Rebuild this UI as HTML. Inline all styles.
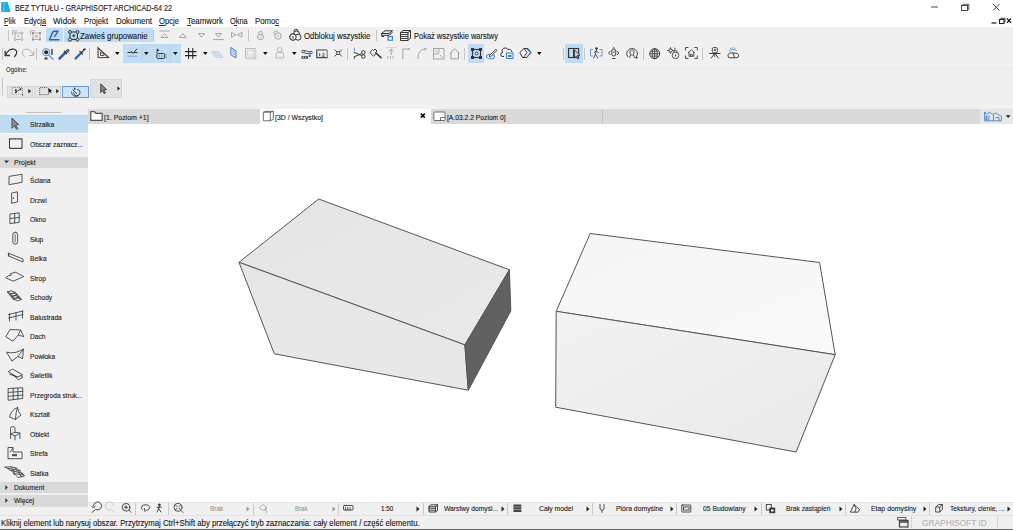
<!DOCTYPE html>
<html><head><meta charset="utf-8"><style>
html,body{margin:0;padding:0;}
body{width:1013px;height:530px;overflow:hidden;position:relative;background:#fff;font-family:"Liberation Sans",sans-serif;}
.t{position:absolute;white-space:nowrap;-webkit-text-stroke:0.12px currentColor;}
svg{overflow:visible}
</style></head><body>
<div style="position:absolute;left:0px;top:0px;width:1013px;height:26.5px;background:#ffffff;"></div>
<div class="t" style="left:14.8px;top:3.78px;font-size:9px;line-height:9px;color:#1a1a1a;transform:scaleX(0.802);transform-origin:0 0;">BEZ TYTUŁU - GRAPHISOFT ARCHICAD-64 22</div>
<svg style="position:absolute;left:1px;top:2px;" width="11" height="10" viewBox="0 0 11 10"><rect x="0.2" y="0" width="10.4" height="9.9" fill="#d8f1fa"/><path d="M0.2 0 H6.3 L9.2 9.9 H0.2 Z" fill="#22ade3"/><path d="M2.6 0.5 L3.6 0.5 L3.4 9.9 L2.2 9.9 Z" fill="#5ccff5" opacity="0.8"/><path d="M6.3 0 L9.2 9.9 H8.4 L5.6 0.6Z" fill="#1a9fd6"/></svg>
<div class="t" style="left:4.3px;top:17.76px;font-size:8.2px;line-height:8.2px;color:#1a1a1a;transform:scaleX(0.870);transform-origin:0 0;">Plik</div>
<div class="t" style="left:23.7px;top:17.76px;font-size:8.2px;line-height:8.2px;color:#1a1a1a;transform:scaleX(0.898);transform-origin:0 0;">Edycja</div>
<div class="t" style="left:52.9px;top:17.76px;font-size:8.2px;line-height:8.2px;color:#1a1a1a;transform:scaleX(1.014);transform-origin:0 0;">Widok</div>
<div class="t" style="left:83.5px;top:17.76px;font-size:8.2px;line-height:8.2px;color:#1a1a1a;transform:scaleX(0.944);transform-origin:0 0;">Projekt</div>
<div class="t" style="left:115.5px;top:17.76px;font-size:8.2px;line-height:8.2px;color:#1a1a1a;transform:scaleX(0.966);transform-origin:0 0;">Dokument</div>
<div class="t" style="left:158.9px;top:17.76px;font-size:8.2px;line-height:8.2px;color:#1a1a1a;transform:scaleX(0.934);transform-origin:0 0;">Opcje</div>
<div class="t" style="left:187px;top:17.76px;font-size:8.2px;line-height:8.2px;color:#1a1a1a;transform:scaleX(0.961);transform-origin:0 0;">Teamwork</div>
<div class="t" style="left:230px;top:17.76px;font-size:8.2px;line-height:8.2px;color:#1a1a1a;transform:scaleX(0.903);transform-origin:0 0;">Okna</div>
<div class="t" style="left:255.4px;top:17.76px;font-size:8.2px;line-height:8.2px;color:#1a1a1a;transform:scaleX(0.948);transform-origin:0 0;">Pomoc</div>
<div style="position:absolute;left:4.3px;top:25.2px;width:3.3px;height:0.6999999999999993px;background:#333;"></div>
<div style="position:absolute;left:42.3px;top:25.2px;width:3.700000000000003px;height:0.6999999999999993px;background:#333;"></div>
<div style="position:absolute;left:159px;top:25.2px;width:5.5px;height:0.6999999999999993px;background:#333;"></div>
<div style="position:absolute;left:187.3px;top:25.2px;width:4.199999999999989px;height:0.6999999999999993px;background:#333;"></div>
<div style="position:absolute;left:233.6px;top:25.2px;width:3.0px;height:0.6999999999999993px;background:#333;"></div>
<div style="position:absolute;left:275px;top:25.2px;width:3.5px;height:0.6999999999999993px;background:#333;"></div>
<svg style="position:absolute;left:925px;top:0px;" width="88" height="26" viewBox="0 0 88 26">
<line x1="6" y1="7" x2="13" y2="7" stroke="#333" stroke-width="0.9"/>
<rect x="36.5" y="5.5" width="6" height="5" fill="none" stroke="#333" stroke-width="0.9"/>
<path d="M38 5.5 V4.3 H43.8 V9.5 H42.5" fill="none" stroke="#333" stroke-width="0.8"/>
<path d="M68 4 L74.5 10.5 M74.5 4 L68 10.5" stroke="#333" stroke-width="0.9"/>
<line x1="66.5" y1="23" x2="71.5" y2="23" stroke="#222" stroke-width="1.3"/>
<rect x="74.5" y="19.5" width="4.5" height="4" fill="none" stroke="#222" stroke-width="1.1"/>
<path d="M76 19.5 V18.3 H80 V22 H79" fill="none" stroke="#222" stroke-width="0.9"/>
<path d="M82 18.5 L86 22.8 M86 18.5 L82 22.8" stroke="#222" stroke-width="1.3"/>
</svg>
<div style="position:absolute;left:0px;top:26.5px;width:1013px;height:83.5px;background:#f0f0f0;"></div>
<div style="position:absolute;left:0px;top:64px;width:1013px;height:1px;background:#f5f5f5;"></div>
<div style="position:absolute;left:0px;top:105.4px;width:1013px;height:0.7999999999999972px;background:#f4f4f4;"></div>
<div style="position:absolute;left:45.9px;top:28.4px;width:17.300000000000004px;height:14.0px;background:#bfdcf4;"></div>
<div style="position:absolute;left:63.8px;top:28.4px;width:88.8px;height:14.0px;background:#bfdcf4;"></div>
<div class="t" style="left:80.2px;top:32.30px;font-size:8.5px;line-height:8.5px;color:#1a1a1a;transform:scaleX(0.924);transform-origin:0 0;">Zawieś grupowanie</div>
<div class="t" style="left:303.6px;top:32.30px;font-size:8.5px;line-height:8.5px;color:#1a1a1a;transform:scaleX(0.919);transform-origin:0 0;">Odblokuj wszystkie</div>
<div class="t" style="left:413.6px;top:32.30px;font-size:8.5px;line-height:8.5px;color:#1a1a1a;transform:scaleX(0.880);transform-origin:0 0;">Pokaż wszystkie warstwy</div>
<div style="position:absolute;left:8.2px;top:30px;width:1.0px;height:11px;background:#c4c4c4;"></div>
<div style="position:absolute;left:153.3px;top:30px;width:1.0px;height:11px;background:#c4c4c4;"></div>
<div style="position:absolute;left:247.8px;top:30px;width:1.0px;height:11px;background:#c4c4c4;"></div>
<div style="position:absolute;left:375.5px;top:30px;width:1.0px;height:11px;background:#c4c4c4;"></div>
<div style="position:absolute;left:122.5px;top:44px;width:29.0px;height:18.700000000000003px;background:#bfdcf4;"></div>
<div style="position:absolute;left:141.6px;top:44px;width:0.5999999999999943px;height:18.700000000000003px;background:#b5d2ee;"></div>
<div style="position:absolute;left:152px;top:44px;width:28.5px;height:18.700000000000003px;background:#bfdcf4;"></div>
<div style="position:absolute;left:169.8px;top:44px;width:0.5999999999999943px;height:18.700000000000003px;background:#b5d2ee;"></div>
<div style="position:absolute;left:468px;top:44px;width:16px;height:18.700000000000003px;background:#bfdcf4;"></div>
<div style="position:absolute;left:564.7px;top:44px;width:18.59999999999991px;height:18.700000000000003px;background:#bfdcf4;"></div>
<div style="position:absolute;left:2.0px;top:48px;width:1.0px;height:11.5px;background:#c4c4c4;"></div>
<div style="position:absolute;left:36.0px;top:48px;width:1.0px;height:11.5px;background:#c4c4c4;"></div>
<div style="position:absolute;left:88.8px;top:48px;width:1.0px;height:11.5px;background:#c4c4c4;"></div>
<div style="position:absolute;left:347.3px;top:48px;width:1.0px;height:11.5px;background:#c4c4c4;"></div>
<div style="position:absolute;left:463.5px;top:48px;width:1.0px;height:11.5px;background:#c4c4c4;"></div>
<div style="position:absolute;left:562.8px;top:48px;width:1.0px;height:11.5px;background:#c4c4c4;"></div>
<div style="position:absolute;left:584.2px;top:48px;width:1.0px;height:11.5px;background:#c4c4c4;"></div>
<div style="position:absolute;left:643.2px;top:48px;width:1.0px;height:11.5px;background:#c4c4c4;"></div>
<div style="position:absolute;left:702.0px;top:48px;width:1.0px;height:11.5px;background:#c4c4c4;"></div>
<div class="t" style="left:6.4px;top:66.31px;font-size:7.2px;line-height:7.2px;color:#333;transform:scaleX(0.841);transform-origin:0 0;">Ogólne:</div>
<div style="position:absolute;left:2.1px;top:78px;width:1.0px;height:18px;background:#c8c8c8;"></div>
<div style="position:absolute;left:7px;top:85.7px;width:25.700000000000003px;height:12.200000000000003px;background:#e3e3e3;box-sizing:border-box;border:1px solid #d2d2d2;"></div>
<div style="position:absolute;left:34.4px;top:85.7px;width:26.200000000000003px;height:12.200000000000003px;background:#e3e3e3;box-sizing:border-box;border:1px solid #d2d2d2;"></div>
<div style="position:absolute;left:62.3px;top:85.7px;width:26.299999999999997px;height:12.200000000000003px;background:#cde3f8;box-sizing:border-box;border:1px solid #5a9ad6;"></div>
<div style="position:absolute;left:89.9px;top:79px;width:31.799999999999997px;height:18.900000000000006px;background:#e1e1e1;box-sizing:border-box;border:1px solid #d6d6d6;"></div>
<div style="position:absolute;left:0px;top:108.5px;width:88px;height:406.5px;background:#f0f0f0;"></div>
<div style="position:absolute;left:26px;top:112px;width:35px;height:1px;background:#c9bfb6;"></div>
<div style="position:absolute;left:0px;top:132.9px;width:87.6px;height:0.799999999999983px;background:#f7fbfe;"></div>
<div style="position:absolute;left:0px;top:114.6px;width:87.6px;height:18.30000000000001px;background:#bfdcf2;"></div>
<div style="position:absolute;left:0px;top:114.3px;width:87.6px;height:0.7999999999999972px;background:#e6f4fc;"></div>
<div style="position:absolute;left:0px;top:115.1px;width:87.6px;height:0.7000000000000028px;background:#b7d4ea;"></div>
<div class="t" style="left:30px;top:121.13px;font-size:8px;line-height:8px;color:#1a1a1a;transform:scaleX(0.834);transform-origin:0 0;">Strzałka</div>
<div class="t" style="left:30px;top:140.63px;font-size:8px;line-height:8px;color:#1a1a1a;transform:scaleX(0.825);transform-origin:0 0;">Obszar zaznacz...</div>
<div style="position:absolute;left:0px;top:156.5px;width:87.6px;height:11.800000000000011px;background:#d9d9d9;"></div>
<div class="t" style="left:13.9px;top:158.53px;font-size:8px;line-height:8px;color:#1a1a1a;transform:scaleX(0.876);transform-origin:0 0;">Projekt</div>
<div class="t" style="left:30.2px;top:177.03px;font-size:8px;line-height:8px;color:#1a1a1a;transform:scaleX(0.831);transform-origin:0 0;">Ściana</div>
<div class="t" style="left:30.2px;top:196.53px;font-size:8px;line-height:8px;color:#1a1a1a;transform:scaleX(0.831);transform-origin:0 0;">Drzwi</div>
<div class="t" style="left:30.2px;top:216.03px;font-size:8px;line-height:8px;color:#1a1a1a;transform:scaleX(0.831);transform-origin:0 0;">Okno</div>
<div class="t" style="left:30.2px;top:235.53px;font-size:8px;line-height:8px;color:#1a1a1a;transform:scaleX(0.831);transform-origin:0 0;">Słup</div>
<div class="t" style="left:30.2px;top:255.03px;font-size:8px;line-height:8px;color:#1a1a1a;transform:scaleX(0.831);transform-origin:0 0;">Belka</div>
<div class="t" style="left:30.2px;top:274.53px;font-size:8px;line-height:8px;color:#1a1a1a;transform:scaleX(0.831);transform-origin:0 0;">Strop</div>
<div class="t" style="left:30.2px;top:294.03px;font-size:8px;line-height:8px;color:#1a1a1a;transform:scaleX(0.831);transform-origin:0 0;">Schody</div>
<div class="t" style="left:30.2px;top:313.53px;font-size:8px;line-height:8px;color:#1a1a1a;transform:scaleX(0.831);transform-origin:0 0;">Balustrada</div>
<div class="t" style="left:30.2px;top:333.03px;font-size:8px;line-height:8px;color:#1a1a1a;transform:scaleX(0.831);transform-origin:0 0;">Dach</div>
<div class="t" style="left:30.2px;top:352.53px;font-size:8px;line-height:8px;color:#1a1a1a;transform:scaleX(0.831);transform-origin:0 0;">Powłoka</div>
<div class="t" style="left:30.2px;top:372.03px;font-size:8px;line-height:8px;color:#1a1a1a;transform:scaleX(0.831);transform-origin:0 0;">Świetlik</div>
<div class="t" style="left:30.2px;top:391.53px;font-size:8px;line-height:8px;color:#1a1a1a;transform:scaleX(0.831);transform-origin:0 0;">Przegroda struk...</div>
<div class="t" style="left:30.2px;top:411.03px;font-size:8px;line-height:8px;color:#1a1a1a;transform:scaleX(0.831);transform-origin:0 0;">Kształt</div>
<div class="t" style="left:30.2px;top:430.53px;font-size:8px;line-height:8px;color:#1a1a1a;transform:scaleX(0.831);transform-origin:0 0;">Obiekt</div>
<div class="t" style="left:30.2px;top:450.03px;font-size:8px;line-height:8px;color:#1a1a1a;transform:scaleX(0.831);transform-origin:0 0;">Strefa</div>
<div class="t" style="left:30.2px;top:469.53px;font-size:8px;line-height:8px;color:#1a1a1a;transform:scaleX(0.831);transform-origin:0 0;">Siatka</div>
<div style="position:absolute;left:0px;top:481.6px;width:87.6px;height:11.899999999999977px;background:#d9d9d9;"></div>
<div style="position:absolute;left:0px;top:494.7px;width:87.6px;height:11.900000000000034px;background:#d9d9d9;"></div>
<div class="t" style="left:14.4px;top:484.03px;font-size:8px;line-height:8px;color:#1a1a1a;transform:scaleX(0.831);transform-origin:0 0;">Dokument</div>
<div class="t" style="left:14.4px;top:497.13px;font-size:8px;line-height:8px;color:#1a1a1a;transform:scaleX(0.831);transform-origin:0 0;">Więcej</div>
<div style="position:absolute;left:88px;top:109.2px;width:925px;height:14.599999999999994px;background:#d9d9d9;"></div>
<div style="position:absolute;left:259.6px;top:109.2px;width:171.29999999999995px;height:14.599999999999994px;background:#ffffff;"></div>
<div style="position:absolute;left:602.1px;top:109.2px;width:0.7999999999999545px;height:14.599999999999994px;background:#c4c4c4;"></div>
<div style="position:absolute;left:979.6px;top:109.2px;width:33.39999999999998px;height:14.599999999999994px;background:#e6e6e6;"></div>
<div class="t" style="left:104.2px;top:114.07px;font-size:7px;line-height:7px;color:#1a1a1a;transform:scaleX(0.992);transform-origin:0 0;">[1. Poziom +1]</div>
<div class="t" style="left:275.4px;top:114.07px;font-size:7px;line-height:7px;color:#1a1a1a;transform:scaleX(0.985);transform-origin:0 0;">[3D / Wszystko]</div>
<div class="t" style="left:446.7px;top:114.07px;font-size:7px;line-height:7px;color:#1a1a1a;transform:scaleX(0.961);transform-origin:0 0;">[A.03.2.2 Poziom 0]</div>
<div style="position:absolute;left:88px;top:123.8px;width:925px;height:378.0px;background:#ffffff;"></div>
<svg style="position:absolute;left:0;top:0" width="1013" height="530" viewBox="0 0 1013 530">
<defs>
<linearGradient id="g1" x1="0" y1="0" x2="1" y2="1"><stop offset="0" stop-color="#e5e5e5"/><stop offset="1" stop-color="#e9e9e9"/></linearGradient>
<linearGradient id="g2" x1="0" y1="0" x2="1" y2="1"><stop offset="0" stop-color="#e6e6e6"/><stop offset="1" stop-color="#e8e8e8"/></linearGradient>
<linearGradient id="g3" x1="0" y1="0" x2="1" y2="1"><stop offset="0" stop-color="#f5f5f5"/><stop offset="1" stop-color="#f9f9f9"/></linearGradient>
<linearGradient id="g4" x1="0" y1="0" x2="1" y2="1"><stop offset="0" stop-color="#f2f2f2"/><stop offset="1" stop-color="#e9e9e9"/></linearGradient>
</defs>
<g stroke="#555" stroke-width="1" stroke-linejoin="round">
<path d="M318.7 199 L509.4 269.8 L464.9 344.9 L239 262.3 Z" fill="url(#g1)"/>
<path d="M239 262.3 L464.9 344.9 L468.3 390.2 L274.3 353.8 Z" fill="url(#g2)"/>
<path d="M509.4 269.8 L510.8 310.9 L468.3 390.2 L464.9 344.9 Z" fill="#616161"/>
<path d="M590.2 233.5 L819.6 262.5 L835.2 354.7 L556.2 311.3 Z" fill="url(#g3)"/>
<path d="M556.2 311.3 L835.2 354.7 L796.1 452 L555.7 407.2 Z" fill="url(#g4)"/>
</g>
</svg>
<div style="position:absolute;left:88px;top:501.8px;width:925px;height:12.999999999999943px;background:#f0f0f0;"></div>
<div style="position:absolute;left:88px;top:501.8px;width:925px;height:0.5999999999999659px;background:#e4e4e4;"></div>
<div class="t" style="left:210px;top:505.00px;font-size:7.8px;line-height:7.8px;color:#9a9a9a;transform:scaleX(0.829);transform-origin:0 0;">Brak</div>
<div class="t" style="left:295.2px;top:505.00px;font-size:7.8px;line-height:7.8px;color:#9a9a9a;transform:scaleX(0.779);transform-origin:0 0;">Brak</div>
<div class="t" style="left:380.6px;top:505.00px;font-size:7.8px;line-height:7.8px;color:#222;transform:scaleX(0.817);transform-origin:0 0;">1:50</div>
<div class="t" style="left:443.7px;top:505.00px;font-size:7.8px;line-height:7.8px;color:#222;transform:scaleX(0.859);transform-origin:0 0;">Warstwy domyśl...</div>
<div class="t" style="left:538.7px;top:505.00px;font-size:7.8px;line-height:7.8px;color:#222;transform:scaleX(0.874);transform-origin:0 0;">Cały model</div>
<div class="t" style="left:616.3px;top:505.00px;font-size:7.8px;line-height:7.8px;color:#222;transform:scaleX(0.876);transform-origin:0 0;">Pióra domyślne</div>
<div class="t" style="left:702.9px;top:505.00px;font-size:7.8px;line-height:7.8px;color:#222;transform:scaleX(0.869);transform-origin:0 0;">05 Budowlany</div>
<div class="t" style="left:786.3px;top:505.00px;font-size:7.8px;line-height:7.8px;color:#222;transform:scaleX(0.861);transform-origin:0 0;">Brak zastąpień</div>
<div class="t" style="left:870.7px;top:505.00px;font-size:7.8px;line-height:7.8px;color:#222;transform:scaleX(0.886);transform-origin:0 0;">Etap domyślny</div>
<div class="t" style="left:950.2px;top:505.00px;font-size:7.8px;line-height:7.8px;color:#222;transform:scaleX(0.853);transform-origin:0 0;">Tekstury, cienie, ...</div>
<div style="position:absolute;left:134.6px;top:503px;width:1.0px;height:11.5px;background:#cacaca;"></div>
<div style="position:absolute;left:168.4px;top:503px;width:1.0px;height:11.5px;background:#cacaca;"></div>
<div style="position:absolute;left:253.3px;top:503px;width:1.0px;height:11.5px;background:#cacaca;"></div>
<div style="position:absolute;left:337.8px;top:503px;width:1.0px;height:11.5px;background:#cacaca;"></div>
<div style="position:absolute;left:422.9px;top:503px;width:1.0px;height:11.5px;background:#cacaca;"></div>
<div style="position:absolute;left:507.1px;top:503px;width:1.0px;height:11.5px;background:#cacaca;"></div>
<div style="position:absolute;left:591.9px;top:503px;width:1.0px;height:11.5px;background:#cacaca;"></div>
<div style="position:absolute;left:676.2px;top:503px;width:1.0px;height:11.5px;background:#cacaca;"></div>
<div style="position:absolute;left:761.0px;top:503px;width:1.0px;height:11.5px;background:#cacaca;"></div>
<div style="position:absolute;left:845.4px;top:503px;width:1.0px;height:11.5px;background:#cacaca;"></div>
<div style="position:absolute;left:929.2px;top:503px;width:1.0px;height:11.5px;background:#cacaca;"></div>
<svg style="position:absolute;left:246.3px;top:505.5px;" width="4" height="6" viewBox="0 0 4 6"><path d="M0.5 0.5 L3.5 3 L0.5 5.5Z" fill="#9a9a9a"/></svg>
<svg style="position:absolute;left:331.5px;top:505.5px;" width="4" height="6" viewBox="0 0 4 6"><path d="M0.5 0.5 L3.5 3 L0.5 5.5Z" fill="#9a9a9a"/></svg>
<svg style="position:absolute;left:416px;top:505.5px;" width="4" height="6" viewBox="0 0 4 6"><path d="M0.5 0.5 L3.5 3 L0.5 5.5Z" fill="#222"/></svg>
<svg style="position:absolute;left:501.3px;top:505.5px;" width="4" height="6" viewBox="0 0 4 6"><path d="M0.5 0.5 L3.5 3 L0.5 5.5Z" fill="#222"/></svg>
<svg style="position:absolute;left:586px;top:505.5px;" width="4" height="6" viewBox="0 0 4 6"><path d="M0.5 0.5 L3.5 3 L0.5 5.5Z" fill="#222"/></svg>
<svg style="position:absolute;left:670.4px;top:505.5px;" width="4" height="6" viewBox="0 0 4 6"><path d="M0.5 0.5 L3.5 3 L0.5 5.5Z" fill="#222"/></svg>
<svg style="position:absolute;left:754.3px;top:505.5px;" width="4" height="6" viewBox="0 0 4 6"><path d="M0.5 0.5 L3.5 3 L0.5 5.5Z" fill="#222"/></svg>
<svg style="position:absolute;left:838.6px;top:505.5px;" width="4" height="6" viewBox="0 0 4 6"><path d="M0.5 0.5 L3.5 3 L0.5 5.5Z" fill="#222"/></svg>
<svg style="position:absolute;left:922.7px;top:505.5px;" width="4" height="6" viewBox="0 0 4 6"><path d="M0.5 0.5 L3.5 3 L0.5 5.5Z" fill="#222"/></svg>
<svg style="position:absolute;left:1007.2px;top:505.5px;" width="4" height="6" viewBox="0 0 4 6"><path d="M0.5 0.5 L3.5 3 L0.5 5.5Z" fill="#222"/></svg>
<div style="position:absolute;left:0px;top:514.8px;width:1013px;height:13.900000000000091px;background:#f0f0f0;"></div>
<div style="position:absolute;left:0px;top:514.8px;width:1013px;height:0.6000000000000227px;background:#e2e2e2;"></div>
<div style="position:absolute;left:0px;top:528.7px;width:1013px;height:1.2999999999999545px;background:#6b6b6b;"></div>
<div class="t" style="left:1.4px;top:519.20px;font-size:8.5px;line-height:8.5px;color:#1a1a1a;transform:scaleX(0.914);transform-origin:0 0;">Kliknij element lub narysuj obszar. Przytrzymaj Ctrl+Shift aby przełączyć tryb zaznaczania: cały element / część elementu.</div>
<div class="t" style="left:922px;top:518.59px;font-size:8.4px;line-height:8.4px;color:#b4b4b4;transform:scaleX(0.996);transform-origin:0 0;">GRAPHISOFT ID</div>
<div style="position:absolute;left:911.2px;top:516px;width:0.7999999999999545px;height:12px;background:#d4d4d4;"></div>
<div style="position:absolute;left:996.6px;top:516px;width:0.7999999999999545px;height:12px;background:#d4d4d4;"></div>
<svg style="position:absolute;left:11.5px;top:29.5px;" width="12" height="11" viewBox="0 0 12 11"><g fill="none" stroke="#aaaaaa" stroke-width="0.9"><path d="M0.5 5 V0.8 H5.5"/><rect x="3" y="3" width="7" height="6.5"/><circle cx="3" cy="3" r="1" fill="#f0f0f0"/><circle cx="10" cy="3" r="1" fill="#f0f0f0"/><circle cx="3" cy="9.5" r="1" fill="#f0f0f0"/><circle cx="10" cy="9.5" r="1" fill="#f0f0f0"/><rect x="5.5" y="5.3" width="2" height="2" fill="#bbb" stroke="none"/></g></svg>
<svg style="position:absolute;left:29.8px;top:29.5px;" width="12" height="11" viewBox="0 0 12 11"><g fill="none" stroke="#aaaaaa" stroke-width="0.9"><path d="M0.5 5 V0.8 H5.5"/><rect x="3" y="3" width="7" height="6.5"/><rect x="2" y="2" width="2" height="2" fill="#999" stroke="none"/><rect x="9" y="2" width="2" height="2" fill="#999" stroke="none"/><rect x="2" y="8.5" width="2" height="2" fill="#999" stroke="none"/><rect x="9" y="8.5" width="2" height="2" fill="#999" stroke="none"/><circle cx="6.5" cy="6.2" r="1.1"/></g></svg>
<svg style="position:absolute;left:48px;top:30px;" width="12" height="11" viewBox="0 0 12 11"><g fill="none" stroke-linecap="round" stroke-linejoin="round"><path d="M10.8 9.8 H1.5 L4.8 2 Q5.2 1.2 6.5 1.2 H9.5" stroke="#2f64a8" stroke-width="1.5"/><path d="M10 1.6 L6.8 6.2" stroke="#2f64a8" stroke-width="1.4"/><path d="M6.5 5.8 L5.9 7.2" stroke="#5a9ee8" stroke-width="1.1"/></g></svg>
<svg style="position:absolute;left:67.8px;top:29.5px;" width="11.5" height="12" viewBox="0 0 11.5 12"><g fill="none" stroke="#333" stroke-width="1"><rect x="2" y="2" width="7.5" height="7.5"/><circle cx="2" cy="2" r="1.5" fill="#bfdcf4"/><circle cx="9.5" cy="2" r="1.5" fill="#bfdcf4"/><circle cx="2" cy="9.5" r="1.5" fill="#bfdcf4"/><circle cx="9.5" cy="9.5" r="1.5" fill="#bfdcf4"/><path d="M5.75 4 V7.5 M4 5.75 H7.5" stroke-width="0.9"/></g><path d="M0 8 V11.5 H4" stroke="#9c9c9c" fill="none" stroke-width="0.8"/></svg>
<svg style="position:absolute;left:159px;top:30px;" width="12" height="9" viewBox="0 0 12 9"><g fill="none" stroke="#9c9c9c" stroke-width="0.9"><path d="M0.5 1 H10.5"/><path d="M5.5 3.5 L9 7.5 H2 Z"/></g></svg>
<svg style="position:absolute;left:179px;top:33px;" width="8" height="5" viewBox="0 0 8 5"><path d="M3.7 0.5 L7 4.5 H0.5 Z" fill="none" stroke="#9c9c9c" stroke-width="0.9"/></svg>
<svg style="position:absolute;left:197.8px;top:32.8px;" width="7" height="5" viewBox="0 0 7 5"><path d="M0.5 0.5 H6.5 L3.5 4.2 Z" fill="none" stroke="#9c9c9c" stroke-width="0.9"/></svg>
<svg style="position:absolute;left:213.3px;top:32.5px;" width="11" height="7.5" viewBox="0 0 11 7.5"><g fill="none" stroke="#9c9c9c" stroke-width="0.9"><path d="M2.5 0.5 H8.5 L5.5 4.2 Z"/><path d="M0 6.6 H10.8"/></g></svg>
<svg style="position:absolute;left:231px;top:32px;" width="12" height="6" viewBox="0 0 12 6"><g fill="none" stroke="#9c9c9c" stroke-width="0.9"><path d="M0.5 0.5 L5 2.8 L0.5 5.2 Z"/><path d="M11 0.5 L6.5 2.8 L11 5.2 Z"/></g></svg>
<svg style="position:absolute;left:256.5px;top:29.8px;" width="7" height="10" viewBox="0 0 7 10"><g fill="none" stroke="#9c9c9c" stroke-width="0.9"><path d="M1.8 4.5 V3 A1.7 1.7 0 0 1 5.2 3 V4.5"/><rect x="0.5" y="4.5" width="6" height="5" rx="2.5"/><path d="M3.5 6.3 V7.8"/></g></svg>
<svg style="position:absolute;left:273.3px;top:30.2px;" width="9" height="9.5" viewBox="0 0 9 9.5"><g fill="none" stroke="#9c9c9c" stroke-width="0.9"><path d="M1 4.5 V2.5 A1.7 1.7 0 0 1 4.4 2.5"/><circle cx="5" cy="6" r="3.2"/><path d="M5 5 V7"/></g></svg>
<svg style="position:absolute;left:289.3px;top:29.5px;" width="13" height="11" viewBox="0 0 13 11"><g fill="none" stroke="#333" stroke-width="1"><circle cx="4" cy="7" r="3.2" fill="#f0f0f0"/><circle cx="7.5" cy="4" r="3" /><circle cx="9" cy="7.2" r="3" fill="#f0f0f0"/><circle cx="4" cy="7" r="3.2" fill="#f0f0f0"/><path d="M4 6 V8.5"/><path d="M5 1.5 A2 2 0 0 1 9 1" /></g></svg>
<svg style="position:absolute;left:381px;top:30px;" width="12.5" height="11" viewBox="0 0 12.5 11"><g fill="none" stroke="#333" stroke-width="1"><path d="M0.5 3.5 L4 0.8 H11.5 L8 3.5 Z" fill="#f0f0f0"/><path d="M0.5 3.5 V5.3 H8 L11.5 2.5"/><path d="M0.5 6.5 L3 6.5"/></g><rect x="6.5" y="6" width="5.5" height="4.8" fill="#3d7fd0"/><rect x="7.8" y="7.2" width="3" height="2.4" fill="#fff"/></svg>
<svg style="position:absolute;left:399.5px;top:29.5px;" width="11" height="11" viewBox="0 0 11 11"><g fill="none" stroke="#333" stroke-width="1"><path d="M0.5 2.5 L3 0.5 H10.5 V8 L8 10.5 H0.5 Z" fill="#f0f0f0"/><path d="M0.5 2.5 H8 V10.5 M8 2.5 L10.5 0.5"/><path d="M0.5 4.5 H8 M0.5 6.5 H8 M0.5 8.5 H8" stroke-width="0.9"/></g></svg>
<svg style="position:absolute;left:4px;top:48px;" width="14" height="10" viewBox="0 0 14 10"><path d="M1.8 6.5 Q5 0.5 9.5 1.2 Q13.5 2 12.5 5.5 Q12 7 10.5 8.5" fill="none" stroke="#333" stroke-width="1.2" stroke-linecap="round"/><path d="M1.2 2.8 L1.2 7.5 L6 7.5" fill="none" stroke="#333" stroke-width="1.3"/></svg>
<svg style="position:absolute;left:20.5px;top:48px;" width="14" height="10" viewBox="0 0 14 10"><path d="M12.2 6.5 Q9 0.5 4.5 1.2 Q0.5 2 1.5 5.5 Q2 7 3.5 8.5" fill="none" stroke="#b0b0b0" stroke-width="1" stroke-linecap="round"/><path d="M12.8 2.8 L12.8 7.5 L8 7.5" fill="none" stroke="#b0b0b0" stroke-width="1"/></svg>
<svg style="position:absolute;left:42.2px;top:47.5px;" width="12.5" height="12" viewBox="0 0 12.5 12"><circle cx="4.2" cy="4.2" r="3.6" fill="none" stroke="#4a90e2" stroke-width="1"/><circle cx="4.2" cy="4.2" r="2" fill="#222"/><path d="M6.5 6.8 L11.5 11.5" stroke="#4a90e2" stroke-width="1.1"/><path d="M10 1.5 V7" stroke="#333" stroke-width="1.3"/><path d="M9 2.3 L10 1 L11 2.3" fill="#333"/><rect x="2.5" y="9.5" width="3" height="2" fill="#333"/></svg>
<svg style="position:absolute;left:58px;top:47.5px;" width="12.5" height="12" viewBox="0 0 12.5 12"><path d="M1.5 10.5 L7.5 4.5" stroke="#2f64a8" stroke-width="2.6" stroke-linecap="round"/><path d="M6 3 L9 6 M8 2 L10.5 4.5 M9.5 1.2 L11.3 3" stroke="#333" stroke-width="1.1"/></svg>
<svg style="position:absolute;left:74px;top:47.5px;" width="12.5" height="12" viewBox="0 0 12.5 12"><path d="M1.5 10.5 L7.5 4.5" stroke="#2f64a8" stroke-width="2.3" stroke-linecap="round"/><path d="M5.5 3.2 L8.8 6.5 M9 1.5 L11.5 0.8 M8 4 L11.5 0.8" stroke="#333" stroke-width="1.1"/></svg>
<svg style="position:absolute;left:97.2px;top:47.3px;" width="12.5" height="11.5" viewBox="0 0 12.5 11.5"><path d="M1 0.8 V10.5 H11.5 Z" fill="none" stroke="#333" stroke-width="1.1"/><path d="M3.5 5 V8.5 H7 Z" fill="none" stroke="#333" stroke-width="0.8"/><path d="M0.5 1 V11 H11" fill="none" stroke="#f0a060" stroke-width="0.8" opacity="0.7"/></svg>
<svg style="position:absolute;left:115.2px;top:51.8px;" width="5" height="3.5" viewBox="0 0 5 3.5"><path d="M0 0 H4.6 L2.3 3 Z" fill="#111"/></svg>
<svg style="position:absolute;left:144px;top:51.8px;" width="5" height="3.5" viewBox="0 0 5 3.5"><path d="M0 0 H4.6 L2.3 3 Z" fill="#111"/></svg>
<svg style="position:absolute;left:172.9px;top:51.8px;" width="5" height="3.5" viewBox="0 0 5 3.5"><path d="M0 0 H4.6 L2.3 3 Z" fill="#111"/></svg>
<svg style="position:absolute;left:202.5px;top:51.8px;" width="5" height="3.5" viewBox="0 0 5 3.5"><path d="M0 0 H4.6 L2.3 3 Z" fill="#111"/></svg>
<svg style="position:absolute;left:262.8px;top:51.8px;" width="5" height="3.5" viewBox="0 0 5 3.5"><path d="M0 0 H4.6 L2.3 3 Z" fill="#111"/></svg>
<svg style="position:absolute;left:292px;top:51.8px;" width="5" height="3.5" viewBox="0 0 5 3.5"><path d="M0 0 H4.6 L2.3 3 Z" fill="#111"/></svg>
<svg style="position:absolute;left:537px;top:51.8px;" width="5" height="3.5" viewBox="0 0 5 3.5"><path d="M0 0 H4.6 L2.3 3 Z" fill="#111"/></svg>
<svg style="position:absolute;left:126.8px;top:47.8px;" width="11" height="10" viewBox="0 0 11 10"><path d="M0.5 4.5 H4.5 M6.5 4.5 H10.5" stroke="#333" stroke-width="1"/><path d="M4 3 L6 5.5 L10 0.8" fill="none" stroke="#333" stroke-width="1"/><path d="M0.5 8.2 H10.5" stroke="#4a90e2" stroke-width="1" stroke-dasharray="1.6 1"/></svg>
<svg style="position:absolute;left:155.8px;top:47.8px;" width="11.5" height="11" viewBox="0 0 11.5 11"><path d="M0.8 0.5 L3.5 2.2 L0.8 3.8 Z" fill="#222"/><path d="M0.8 3.8 V5.5" stroke="#333" stroke-width="0.9"/><rect x="0.8" y="5.5" width="8" height="5" rx="1.5" fill="none" stroke="#333" stroke-width="1"/><path d="M2.8 8 H3.8 M5.5 8 H6.5" stroke="#333" stroke-width="1.1"/><path d="M10.5 6.5 V7.2 M10.5 8.8 V9.5" stroke="#333" stroke-width="0.8"/></svg>
<svg style="position:absolute;left:184.8px;top:48px;" width="11.5" height="11" viewBox="0 0 11.5 11"><g stroke="#222" stroke-width="1.05"><path d="M3.6 0 V11 M7.8 0 V11 M0 3.6 H11.5 M0 7.6 H11.5"/></g></svg>
<svg style="position:absolute;left:210.5px;top:50.5px;" width="12.5" height="7" viewBox="0 0 12.5 7"><path d="M0.5 0.8 H7.5 L12 6.2 H5 Z" fill="#dce8f5" stroke="#a9c4e0" stroke-width="0.8"/><path d="M2.5 2.5 L8.5 3 M4 4.3 L10 4.6" stroke="#b9d0ea" stroke-width="0.6"/></svg>
<svg style="position:absolute;left:229.8px;top:47px;" width="7" height="11.5" viewBox="0 0 7 11.5"><path d="M0.8 0.5 L6 3.8 V11 L0.8 7.8 Z" fill="#cfe0f5" stroke="#4a7fc8" stroke-width="1"/><path d="M1.8 3 L5 5.2 M1.8 5.5 L5 7.5" stroke="#6d9ad8" stroke-width="0.6"/></svg>
<svg style="position:absolute;left:245px;top:47.5px;" width="11.5" height="11.5" viewBox="0 0 11.5 11.5"><rect x="0.5" y="0.5" width="9.5" height="9.5" fill="none" stroke="#b8b8b8" stroke-width="1"/><rect x="2.5" y="2.5" width="5.5" height="5.5" fill="none" stroke="#cfcfcf" stroke-width="0.8"/><path d="M1.5 11 H11 V1.5" stroke="#b9d3ee" fill="none" stroke-width="0.8"/></svg>
<svg style="position:absolute;left:275px;top:47.2px;" width="9.5" height="11.8" viewBox="0 0 9.5 11.8"><circle cx="4.7" cy="2.8" r="2.3" fill="none" stroke="#b8b8b8" stroke-width="1"/><path d="M1 11 V7 Q1 5.5 2.5 5.5 H7 Q8.5 5.5 8.5 7 V11 Z" fill="none" stroke="#b8b8b8" stroke-width="1"/></svg>
<svg style="position:absolute;left:300.5px;top:48px;" width="12" height="11" viewBox="0 0 12 11"><circle cx="2" cy="3.5" r="1.3" fill="none" stroke="#444" stroke-width="0.9"/><path d="M2.8 2.3 L9 4 M2.8 4.8 L9 6" stroke="#444" stroke-width="0.9"/><circle cx="10" cy="4.5" r="1.3" fill="none" stroke="#444" stroke-width="0.9"/><rect x="7.6" y="6.8" width="2.2" height="2.4" fill="#2f7ee0"/><rect x="0.5" y="8.3" width="6.5" height="2.3" fill="#333"/><rect x="1.8" y="9" width="1.2" height="0.9" fill="#f0f0f0"/><rect x="4" y="9" width="1.2" height="0.9" fill="#f0f0f0"/></svg>
<svg style="position:absolute;left:316.3px;top:48.5px;" width="12" height="9.5" viewBox="0 0 12 9.5"><path d="M0.8 0.6 V8.7 H11.5" fill="none" stroke="#444" stroke-width="1.2"/><path d="M0.8 0.8 H11.2 V8.5" fill="none" stroke="#555" stroke-width="0.8"/><path d="M3 0.8 V2 M5 0.8 V2 M7 0.8 V2 M9 0.8 V2" stroke="#444" stroke-width="0.7"/><path d="M3.6 4.2 V7.3 M5.2 5 V5.4 M5.2 6.8 V7.2 M6.5 4.5 Q7.8 3.8 8.3 4.8 Q8.2 5.8 6.5 7.3 H8.6" fill="none" stroke="#333" stroke-width="0.8"/></svg>
<svg style="position:absolute;left:334.3px;top:49.2px;" width="8.5" height="8" viewBox="0 0 8.5 8"><path d="M0.5 0.5 L3 3 M5.5 5 L8 7.5 M8 0.5 L5.5 3 M3 5 L0.5 7.5" stroke="#444" stroke-width="0.9"/><rect x="2.8" y="2.6" width="2.9" height="2.8" fill="none" stroke="#444" stroke-width="0.9"/></svg>
<svg style="position:absolute;left:353px;top:47px;" width="13" height="12.5" viewBox="0 0 13 12.5"><path d="M1.4 0.8 V4.5" stroke="#4a90e2" stroke-width="1"/><path d="M1.4 5.2 V6.3 M1.4 9 V11.8" stroke="#444" stroke-width="1"/><path d="M1.8 5.5 L8.5 8.5 M1.8 9.5 L8.5 6.8" stroke="#333" stroke-width="1"/><circle cx="10.3" cy="5.5" r="1.8" fill="none" stroke="#333" stroke-width="1"/><circle cx="10.3" cy="9.5" r="1.8" fill="none" stroke="#333" stroke-width="1"/></svg>
<svg style="position:absolute;left:369px;top:48px;" width="13" height="11" viewBox="0 0 13 11"><path d="M0.8 4.5 L3.6 1.6 L4.6 2.4 L6 1 L8 3 L6.6 4.4 L7.4 5.3 L4.5 8.2 Z" fill="none" stroke="#333" stroke-width="1" stroke-linejoin="round"/><path d="M7 5 L12 9.8" stroke="#222" stroke-width="1.4" stroke-linecap="round"/></svg>
<svg style="position:absolute;left:386px;top:47px;" width="10.5" height="12" viewBox="0 0 10.5 12"><path d="M0 0.6 H10.5" stroke="#bcd3ec" stroke-width="0.9"/><path d="M5.2 8 V2 M2.8 4.4 L5.2 2 L7.6 4.4" fill="none" stroke="#9c9c9c" stroke-width="0.9"/><path d="M2 11.5 V9 M4.5 11.5 V9 M7 11.5 V9" stroke="#9c9c9c" stroke-width="0.8"/></svg>
<svg style="position:absolute;left:401.8px;top:47.5px;" width="9.5" height="11.5" viewBox="0 0 9.5 11.5"><path d="M0.8 11 V1 H7.5" fill="none" stroke="#9c9c9c" stroke-width="0.9"/><path d="M6.5 0 L8.5 1 L6.5 2" fill="#9c9c9c"/><path d="M0 10 L0.8 11 L1.6 10" fill="#9c9c9c"/></svg>
<svg style="position:absolute;left:417px;top:47.5px;" width="10" height="11.5" viewBox="0 0 10 11.5"><path d="M0.8 11 Q0.8 2 8 1" fill="none" stroke="#9c9c9c" stroke-width="0.9"/><path d="M7 0 L9.5 1 L7.5 2.5" fill="none" stroke="#9c9c9c" stroke-width="0.8"/></svg>
<svg style="position:absolute;left:433px;top:47.5px;" width="11.5" height="11.5" viewBox="0 0 11.5 11.5"><rect x="0.5" y="0.5" width="10.5" height="10.5" fill="none" stroke="#9c9c9c" stroke-width="0.9"/><path d="M0.5 5.8 H5.8 V0.5" fill="none" stroke="#9c9c9c" stroke-width="0.8"/><path d="M2 2 L4.5 4.5 M7 7 L9.5 9.5" stroke="#9c9c9c" stroke-width="0.8"/></svg>
<svg style="position:absolute;left:448.8px;top:47.5px;" width="11.5" height="11.5" viewBox="0 0 11.5 11.5"><path d="M0.8 5.5 L5.7 0.8 L10.7 5.5 M2 4.5 V10.8 H9.5 V4.5" fill="none" stroke="#9c9c9c" stroke-width="1"/></svg>
<svg style="position:absolute;left:469.5px;top:47px;" width="13" height="13" viewBox="0 0 13 13"><rect x="2.5" y="2.5" width="8" height="8" fill="none" stroke="#333" stroke-width="1.1"/><rect x="1" y="1" width="3" height="3" fill="#333"/><rect x="9" y="1" width="3" height="3" fill="#333"/><rect x="1" y="9" width="3" height="3" fill="#333"/><rect x="9" y="9" width="3" height="3" fill="#333"/><circle cx="6.5" cy="6.5" r="1.5" fill="none" stroke="#333" stroke-width="0.8"/></svg>
<svg style="position:absolute;left:486px;top:47.5px;" width="11.5" height="11.5" viewBox="0 0 11.5 11.5"><ellipse cx="4.5" cy="8.5" rx="4" ry="2.3" fill="none" stroke="#4a90e2" stroke-width="1.1"/><path d="M3 8 L9.8 1.2 L11 2.4 L4.2 9.2 Z" fill="#f0f0f0" stroke="#333" stroke-width="0.9"/></svg>
<svg style="position:absolute;left:501px;top:47.3px;" width="12.5" height="12" viewBox="0 0 12.5 12"><path d="M3 9.5 H2 A2 2 0 0 1 1.5 5.5 A3 3 0 0 1 6.8 2.5 A3 3 0 0 1 11 5" fill="none" stroke="#333" stroke-width="1"/><rect x="5.5" y="6" width="6.5" height="5.5" fill="#f0f0f0" stroke="#3d7fd0" stroke-width="1"/><rect x="7" y="8" width="3.5" height="2" fill="#3d7fd0"/></svg>
<svg style="position:absolute;left:519px;top:47.3px;" width="12.5" height="12" viewBox="0 0 12.5 12"><path d="M0.8 5.5 L5 1.5 H9 L11.8 5.5 L7.8 10.5 H3.5 Z" fill="none" stroke="#333" stroke-width="1"/><path d="M5 1.5 L8 5.5 L4.5 10.5" fill="none" stroke="#333" stroke-width="0.9"/><path d="M7.5 1.5 L11.8 5.5 L8 10" fill="none" stroke="#3d7fd0" stroke-width="1.1"/></svg>
<svg style="position:absolute;left:567.5px;top:47.3px;" width="13" height="12" viewBox="0 0 13 12"><rect x="0.6" y="1.5" width="10" height="9" fill="none" stroke="#333" stroke-width="1.1"/><path d="M5.6 1.5 V10.5" stroke="#333" stroke-width="1.1"/><path d="M6.5 3 L12 8.2 L9.4 8.5 L10.8 11.5 L9.7 12 L8.4 9.2 L6.5 10.8 Z" fill="#bfdcf4" stroke="#333" stroke-width="0.9"/></svg>
<svg style="position:absolute;left:589.5px;top:47.3px;" width="12.5" height="12" viewBox="0 0 12.5 12"><path d="M0.5 2.5 H3 M9.5 2.5 H12 M0.5 2.5 V9 H3 M12 2.5 V9 H9.5" fill="none" stroke="#4a90e2" stroke-width="0.9"/><circle cx="6.5" cy="1.6" r="1.3" fill="#333"/><path d="M6.5 3.2 L5.5 7 L3.5 11.5 M5.5 7 L8 11.5 M4 5.5 L6.3 4 L9 6" fill="none" stroke="#333" stroke-width="0.85"/></svg>
<svg style="position:absolute;left:608px;top:47.3px;" width="11.5" height="12" viewBox="0 0 11.5 12"><path d="M2.5 4 L0.5 6 L2.5 8 M9 4 L11 6 L9 8" fill="none" stroke="#333" stroke-width="0.9"/><rect x="3.8" y="2" width="4" height="7" rx="2" fill="none" stroke="#333" stroke-width="0.9"/><path d="M5.8 0 V2 M4 11.5 H7.6" stroke="#333" stroke-width="0.85"/><path d="M4.8 5 H6.8" stroke="#333" stroke-width="0.8"/></svg>
<svg style="position:absolute;left:625.5px;top:47.3px;" width="12" height="12" viewBox="0 0 12 12"><path d="M2 10 A5.2 5.2 0 1 1 10.5 9.5" fill="none" stroke="#333" stroke-width="0.9"/><rect x="4" y="3" width="4" height="5" rx="1.5" fill="none" stroke="#333" stroke-width="0.85"/><path d="M4.5 8 L3.5 11 M7.5 8 L8.5 11 M10.5 9.5 L9.5 11 H11.5 Z" fill="#333" stroke="#333" stroke-width="0.8"/></svg>
<svg style="position:absolute;left:649px;top:47.5px;" width="11.5" height="11.5" viewBox="0 0 11.5 11.5"><circle cx="5.7" cy="5.7" r="5" fill="none" stroke="#333" stroke-width="0.9"/><path d="M0.7 5.7 H10.7 M5.7 0.7 V10.7" stroke="#333" stroke-width="0.85"/><ellipse cx="5.7" cy="5.7" rx="2.4" ry="5" fill="none" stroke="#333" stroke-width="0.8"/><path d="M1.5 3.3 H9.9 M1.5 8.1 H9.9" stroke="#333" stroke-width="0.7"/></svg>
<svg style="position:absolute;left:667px;top:47.3px;" width="12.5" height="12" viewBox="0 0 12.5 12"><path d="M3.5 0.5 L4.3 2.7 L6.5 3.5 L4.3 4.3 L3.5 6.5 L2.7 4.3 L0.5 3.5 L2.7 2.7 Z" fill="none" stroke="#333" stroke-width="0.9"/><circle cx="8.5" cy="8.3" r="3.3" fill="#f0f0f0" stroke="#333" stroke-width="0.85"/><path d="M7 5.2 V4.8 A1.5 1.5 0 0 1 10 4.8 V5.3" fill="none" stroke="#333" stroke-width="0.9"/><path d="M8.5 7.5 V9.5" stroke="#333" stroke-width="0.9"/><path d="M7.2 0.5 L7.6 1.5 L8.5 1.8 L7.6 2.2 L7.2 3.2" fill="none" stroke="#333" stroke-width="0.6"/></svg>
<svg style="position:absolute;left:684.8px;top:47.3px;" width="12.8" height="12" viewBox="0 0 12.8 12"><path d="M0.5 3.5 V0.5 H3.5 M9.3 0.5 H12.3 V3.5 M12.3 8.5 V11.5 H9.3 M3.5 11.5 H0.5 V8.5" fill="none" stroke="#333" stroke-width="0.85"/><path d="M3 5.8 L6.4 2.8 L9.8 5.8 M4 5 V9.3 H8.8 V5" fill="none" stroke="#333" stroke-width="0.85"/><path d="M5.5 9.3 V7.3 H7.3 V9.3" fill="none" stroke="#333" stroke-width="0.8"/></svg>
<svg style="position:absolute;left:708.5px;top:47.3px;" width="11.5" height="12" viewBox="0 0 11.5 12"><rect x="3.3" y="0.6" width="5" height="5.2" rx="1.2" fill="none" stroke="#333" stroke-width="0.9"/><path d="M0 6.5 H11.5" stroke="#333" stroke-width="0.9"/><path d="M5.8 6 L2 11.5 M5.8 6 L9.6 11.5 M5.8 6 V10" stroke="#333" stroke-width="0.9"/><circle cx="5.8" cy="3" r="1" fill="#333"/></svg>
<svg style="position:absolute;left:726.6px;top:47.3px;" width="11.5" height="12" viewBox="0 0 11.5 12"><path d="M2 4 A5 3.5 0 0 1 10 4" fill="none" stroke="#4a90e2" stroke-width="0.85"/><path d="M3 0.8 L3.8 2 M5.7 0 V1.8 M8.5 0.8 L7.7 2" stroke="#4a90e2" stroke-width="0.9"/><path d="M1 8.5 A3.5 2.5 0 0 1 6 6 L10.5 6.5 A2 2.3 0 0 1 10 10.8 H3 A2 2 0 0 1 1 8.5 Z" fill="none" stroke="#333" stroke-width="0.9"/><path d="M6 6 L7.5 10.8" stroke="#333" stroke-width="0.9"/></svg>
<svg style="position:absolute;left:0;top:0" width="90" height="530" viewBox="0 0 90 530">
<g fill="none" stroke="#3a3a3a" stroke-width="0.85" stroke-linejoin="round" stroke-linecap="round">
<path d="M12.2 118.3 L18.8 124.6 L15.6 125 L17.8 128.6 L16.6 129.3 L14.4 125.8 L12.2 128 Z" fill="#8c8c8c" stroke="#444" stroke-width="0.9"/>
<rect x="9.5" y="138.8" width="12.5" height="9.5" stroke-dasharray="1.4 1.1" stroke="#333" stroke-width="1.15"/>
<path d="M9.4 176.3 L22 174.3 V182.3 L9.4 184.6 Z"/>
<path d="M12 193 L17.5 191.8 V202 L12 203.2 Z"/><path d="M13.3 197.5 V198.5" stroke-width="0.9"/>
<path d="M10.3 214 L19.2 212.8 V222.3 L10.3 223.5 Z M14.7 213.3 V223 M10.3 218.5 L19.2 217.5"/>
<rect x="12.8" y="232.2" width="4.8" height="12" rx="2.4"/><path d="M15.2 234.5 V242" stroke-width="0.7"/>
<path d="M8.6 253.3 L23 259 V262 L9 256.2 Z M9 256.2 L8.6 253.3"/>
<path d="M6 277.5 L8.8 275.6 L11.3 275.2 L10.2 273.8 L15.5 272.2 L23.8 276.5 L13.5 281 Z"/>
<path d="M7.5 292 L11 290.8 L15.5 292.5 L12 293.8 Z M9.5 294.3 L13 293.1 L17.5 294.8 L14 296.1 Z M11.5 296.6 L15 295.4 L19.5 297.1 L16 298.4 Z M13.5 298.9 L17 297.7 L21.5 299.4 L18 300.7 Z M7.5 292 L13.5 299.5 M15.5 292.5 L21.5 299.4"/>
<path d="M8.6 314.5 L23 311 M8.6 318 L23 314.5 M9.5 313.6 V321 M16 312.8 V320 M22.5 311 V318"/>
<path d="M6 336.3 L10 329.5 L20.7 330 L23.8 336.7 L18.3 335 L13.1 341 Z M20.7 330 L18.3 335"/>
<path d="M6.8 352.2 Q15 354.5 23.4 349 L22.6 358.5 L17.9 356.5 L12.3 360.9 Z M23.4 349 L17.9 356.5"/>
<path d="M8.5 371.4 L12.5 369.1 L22.7 374.8 L17.6 377 Z M9.5 374.2 L17.6 377 M12.5 374.4 L18.3 379.8 L23 377.2 L21 375.9"/>
<path d="M8.5 388.5 L22.7 387.8 V398.5 L8.5 400.2 Z M13.2 388.3 V399.6 M17.9 388 V399 M8.5 392.4 L22.7 391.4 M8.5 396.3 L22.7 395"/>
<path d="M17.5 407.5 Q11 410 9.5 417 L15.5 419.5 L21 415 Q18 412 17.5 407.5 Z M17.5 407.5 Q15.5 413 15.5 419.5"/>
<path d="M10.6 438.5 V428.2 Q10.6 426.5 12.8 426.5 Q15 426.5 15 428.2 V432.3 L19.9 433 V438.5 M10.6 434 L15 436 L19.9 433 M15 436 V440 M15 432.3 L10.6 434"/>
<path d="M8.4 447.5 H13 V452 H22 V458.7 H8.4 Z M10.2 452 L13 448"/><rect x="12" y="454" width="5" height="2.2" fill="#555" stroke="none"/>
<path d="M5 467 Q12 466 17 468.3 L24.5 476 L18 477.5 Q12 470 5 467 Z M11 467 Q15 471 14.5 474.5 M14.5 467.5 Q19 472 21.3 476.8 M8.5 468.5 L20.5 470.8 M11.5 470.5 L22.8 473.5 M13.8 473.5 L23.8 475"/>
<path d="M4.2 160.5 H9 L6.6 163.2 Z" fill="#333" stroke="none"/>
<path d="M5.3 485 V490 L7.8 487.5 Z" fill="#333" stroke="none"/>
<path d="M5.3 498 V503 L7.8 500.5 Z" fill="#333" stroke="none"/>
</g></svg>
<svg style="position:absolute;left:0;top:0" width="130" height="110" viewBox="0 0 130 110">
<g fill="none" stroke="#333" stroke-width="0.9">
<path d="M12 94.5 V87.5 H22.5 V94.5" stroke-dasharray="1 1" stroke="#777" stroke-width="0.8"/><path d="M12 94.5 H22.5" stroke="#aaa" stroke-dasharray="1 1" stroke-width="0.8"/>
<path d="M16 91.8 L20.5 89.3" stroke-width="0.85"/><rect x="15" y="89.3" width="1.6" height="1.6" fill="#222" stroke="none"/><rect x="15" y="91.6" width="1.6" height="1.6" fill="#222" stroke="none"/><rect x="19.8" y="88.4" width="1.6" height="1.6" fill="#222" stroke="none"/><circle cx="22.5" cy="94.8" r="0.7" fill="#222" stroke="none"/>
<path d="M28.4 89.1 L31.1 91.2 L28.4 93.3 Z" fill="#111" stroke="none"/>
<path d="M39.7 94.7 V87.6 H47 M39.7 94.7 H48.8 V92" stroke-dasharray="1 0.9" stroke="#444"/>
<path d="M48.2 88 L52.2 91 L50.5 91.3 L51.5 93 L50.8 93.3 L49.8 91.7 L48.5 92.8 Z" fill="#111" stroke="none"/>
<path d="M56.2 89.1 L58.9 91.2 L56.2 93.3 Z" fill="#111" stroke="none"/>
<path d="M73.5 92.5 A3.3 3.3 0 1 0 77.3 89.2 M72.6 89.5 L77 94" stroke-width="0.9"/>
<path d="M74.5 87 L75.8 89.5 L73.8 89.5Z" fill="#111" stroke="none"/><path d="M71.5 91.5 A4.5 4.5 0 0 0 78 96" stroke-width="0.8"/>
<path d="M100.8 84 L106.5 89.5 L103.8 89.8 L105.5 93 L104.2 93.7 L102.5 90.5 L100.8 92.5 Z" fill="#8a8a8a" stroke="#333" stroke-width="0.9"/>
<path d="M117.5 86.5 L120 88.5 L117.5 90.5 Z" fill="#111" stroke="none"/>
</g></svg>
<svg style="position:absolute;left:0;top:0" width="1013" height="130" viewBox="0 0 1013 130">
<g fill="#fff" stroke="#555" stroke-width="0.85">
<path d="M90.8 120.4 V111.5 H94.5 L95.5 113.3 H102.2 V120.4 Z" stroke-width="1.25" stroke-linejoin="round"/>
<path d="M263.3 112.2 L266.3 111.3 H273.3 V119.3 L270.3 120.8 H263.3 Z M266.3 111.3 V112.2 M263.3 112.2 H270.3 V120.8 M270.3 112.2 L273.3 111.3"/>
<rect x="433.8" y="112" width="11.3" height="8.5" rx="1"/><path d="M440.5 120.5 V117.5 H445" fill="none"/>
</g>
<path d="M420.8 113.6 L424.8 117.6 M424.8 113.6 L420.8 117.6" stroke="#111" stroke-width="1.6"/>
<g fill="none" stroke="#3d7fd0" stroke-width="0.85">
<path d="M984.6 113 V120.8 H1001.5 V116.5 L995.5 113 L993 114.5 L989 112 L986.5 115.5"/>
<path d="M984.5 117 H988 M984.5 119 H988 M986.5 115.5 V120.8" stroke-width="0.8"/>
<path d="M989 115.3 V120.8 M993.5 114.8 V120.8 M995.5 117.5 H999 V120.8" stroke-width="0.9"/>
<circle cx="985" cy="113" r="0.8" fill="#3d7fd0"/>
</g>
<path d="M1005.8 115.2 H1010.6 L1008.2 118 Z" fill="#222"/>
</svg>
<svg style="position:absolute;left:0;top:495" width="1013" height="35" viewBox="0 495 1013 35">
<g fill="none" stroke="#333" stroke-width="0.85" stroke-linecap="round">
<path d="M93.5 505.8 A4 4 0 1 1 95.8 509.6 M91.8 506.2 L93.5 508 L95.2 506 M95 509.8 L92 512.5" stroke-width="0.9"/>
<path d="M113.5 505.8 A4 4 0 1 0 111.2 509.6 M111.8 509.8 L114.8 512.5" stroke="#c4c4c4" stroke-width="0.9"/>
<circle cx="126" cy="507.3" r="3.8"/><path d="M128.8 510 L131 512.3 M126 505.5 V509 M124.3 507.3 H127.7"/>
<path d="M142.5 509.5 A4.2 2.8 0 1 1 146.5 510.3 M144.5 508.5 L145 511.5" stroke-width="0.9"/>
<circle cx="159.3" cy="504.8" r="0.9" fill="#333"/><path d="M159.3 506.3 L158.5 509 L157 512 M158.7 508.5 L161 512 M157 507.5 L161.5 507" stroke-width="0.9"/>
<circle cx="178" cy="507.3" r="4"/><path d="M181 510.5 L183 512.5 M175.5 505 L177 506.5 M180.5 505 L179 506.5 M175.5 509.7 L177 508.2 M180.5 509.7 L179 508.2"/>
<path d="M259.5 507.5 L263 504.5 L266.5 507 L263.5 510.5 Z M264.5 510.5 L266 507.5 L266.5 512.5" stroke="#a8a8a8"/>
<rect x="343.5" y="505.5" width="9.5" height="4.5" rx="0.8"/><path d="M345.5 507.5 V510 M347.8 507.5 V510 M350 507.5 V510" stroke-width="0.8"/>
<path d="M429 506.5 L431 504.8 H437.5 L435.5 506.5 Z M429 506.5 V512 H435.5 V506.5 L437.5 504.8 V510.5 L435.5 512 M429 508.3 H435.5 M429 510.2 H435.5" stroke-width="0.9"/>
<rect x="513.5" y="504.5" width="7.8" height="7.5" fill="#444" stroke="none"/><path d="M514.5 507 H520.5 M514.5 509.5 H520.5" stroke="#ddd" stroke-width="0.6" stroke-dasharray="1 0.8"/>
<path d="M600 504.5 V509 Q602 512 604 509 V504.5 M602 510.5 V512.5"/>
<rect x="681.8" y="505" width="9" height="7" rx="0.5"/><rect x="683.5" y="507" width="5.6" height="3"/>
<rect x="766.3" y="504.5" width="5" height="5.5" /><rect x="769.8" y="508" width="5" height="4.8" fill="#333"/><rect x="771" y="509.5" width="2.6" height="2" fill="#f0f0f0" stroke="none"/>
<path d="M850.5 511.8 L854 504.5 L859.5 509.5 L858.2 511.8 Z M854 504.5 L856 508.5 L855 511.8"/>
<path d="M936 507 L938.5 504.5 H942.3 V509.5 L939.8 512 H936 Z M936 507 H939.8 V512 M939.8 507 L942.3 504.5"/>
</g>
<path d="M897.5 517.5 H906 V520 H897.5 Z" fill="none" stroke="#444" stroke-width="0.85"/>
<rect x="899.5" y="520.5" width="8.5" height="6.5" fill="#f0f0f0" stroke="#444" stroke-width="1.2"/>
<path d="M899.5 522 H908" stroke="#444" stroke-width="1.5"/>
</svg>
</body></html>
